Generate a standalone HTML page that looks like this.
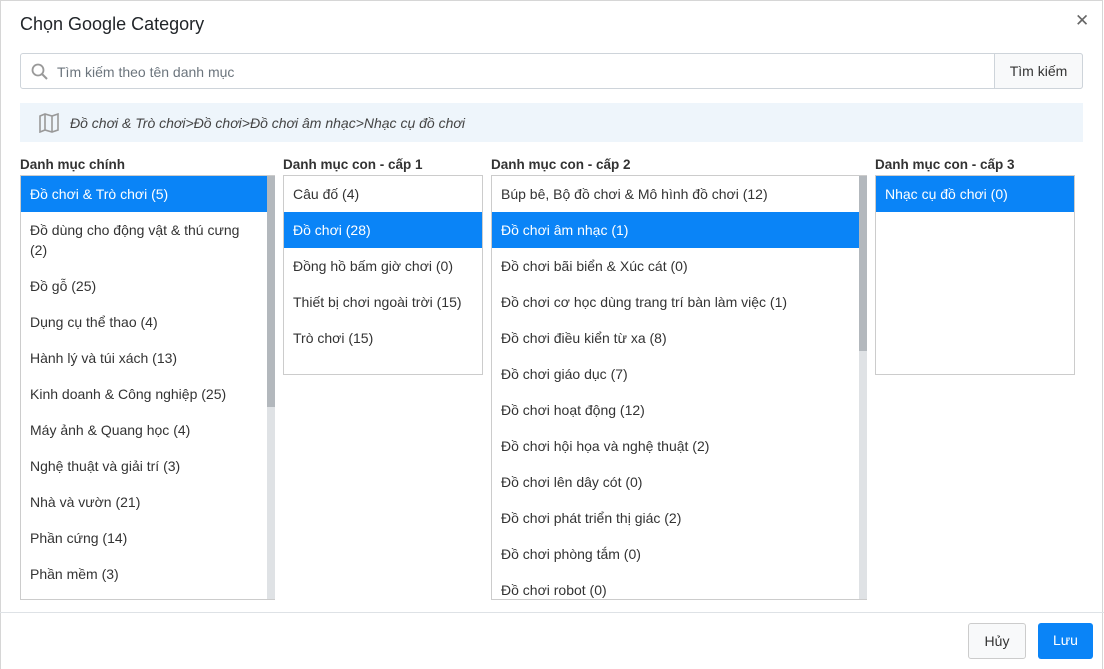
<!DOCTYPE html><html><head><meta charset="utf-8"><style>
*{box-sizing:border-box;margin:0;padding:0}
body{width:1104px;height:669px;background:#fff;font-family:"Liberation Sans",sans-serif;font-size:14px;color:#333;position:relative;overflow:hidden}
.frame{position:absolute;left:0;top:0;width:1103px;height:669px;border:1px solid #d6d6d6;border-bottom:none}
.a{position:absolute}
.title{left:20px;top:14px;font-size:18px;color:#212529}
.close{left:1075px;top:11px;font-size:17px;color:#666}
.search{left:20px;top:53px;width:1063px;height:36px;border:1px solid #ced4da;border-radius:3px}
.search span{position:absolute;left:36px;top:10px;color:#6c757d}
.btn1{position:absolute;right:-1px;top:-1px;height:36px;width:89px;border:1px solid #ced4da;border-radius:0 3px 3px 0;background:#f8f9fa;text-align:center;line-height:34px;color:#333}
.bc{left:20px;top:103px;width:1063px;height:39px;background:#eef5fb}
.bc span{position:absolute;left:50px;top:12px;font-style:italic;font-size:14px;color:#444}
.lab{top:157px;font-weight:bold;font-size:13.5px;color:#333}
.list{border:1px solid #ccc;overflow:hidden}
.it{height:36px;padding:10px 9px;white-space:nowrap;color:#333}
.it.two{height:56px;white-space:normal;line-height:20px;padding:8px 9px}
.sel{background:#0a84f7;color:#fff}
.sb{background:#dfe2e5}.th{background:#b3b8bd}
.foot{left:0;top:612px;width:1104px;border-top:1px solid #dee2e6}
.b{top:623px;height:36px;border-radius:3px;text-align:center;line-height:34px}
</style></head><body><div class="frame"></div>
<div class="a title">Chọn Google Category</div>
<div class="a close">✕</div>
<div class="a search"><svg class="a" style="left:10px;top:9px" width="18" height="18" viewBox="0 0 18 18"><circle cx="7" cy="7" r="5.5" fill="none" stroke="#999" stroke-width="1.8"/><path d="M11 11l5 5" stroke="#999" stroke-width="2"/></svg><span>Tìm kiếm theo tên danh mục</span><div class="btn1">Tìm kiếm</div></div>
<div class="a bc"><svg class="a" style="left:18px;top:10px" width="22" height="20" viewBox="0 0 22 20"><path d="M2 3l5-2 7 2 6-2v16l-6 2-7-2-5 2z M7 1v16 M14 3v16" fill="none" stroke="#999" stroke-width="1.6"/></svg><span>Đồ chơi &amp; Trò chơi&gt;Đồ chơi&gt;Đồ chơi âm nhạc&gt;Nhạc cụ đồ chơi</span></div>
<div class="a lab" style="left:20px">Danh mục chính</div>
<div class="a lab" style="left:283px">Danh mục con - cấp 1</div>
<div class="a lab" style="left:491px">Danh mục con - cấp 2</div>
<div class="a lab" style="left:875px">Danh mục con - cấp 3</div>
<div class="a list" style="left:20px;top:175px;width:255px;height:425px;border-right:none">
<div style="width:246px"><div class="it sel">Đồ chơi &amp; Trò chơi (5)</div><div class="it two">Đồ dùng cho động vật &amp; thú cưng (2)</div><div class="it">Đồ gỗ (25)</div><div class="it">Dụng cụ thể thao (4)</div><div class="it">Hành lý và túi xách (13)</div><div class="it">Kinh doanh &amp; Công nghiệp (25)</div><div class="it">Máy ảnh &amp; Quang học (4)</div><div class="it">Nghệ thuật và giải trí (3)</div><div class="it">Nhà và vườn (21)</div><div class="it">Phần cứng (14)</div><div class="it">Phần mềm (3)</div></div>
<div class="a sb" style="left:246px;top:0;width:9px;height:425px"><div class="th" style="height:231px"></div></div></div>
<div class="a list" style="left:283px;top:175px;width:200px;height:200px"><div class="it">Câu đố (4)</div><div class="it sel">Đồ chơi (28)</div><div class="it">Đồng hồ bấm giờ chơi (0)</div><div class="it">Thiết bị chơi ngoài trời (15)</div><div class="it">Trò chơi (15)</div></div>
<div class="a list" style="left:491px;top:175px;width:376px;height:425px;border-right:none">
<div style="width:367px"><div class="it">Búp bê, Bộ đồ chơi &amp; Mô hình đồ chơi (12)</div><div class="it sel">Đồ chơi âm nhạc (1)</div><div class="it">Đồ chơi bãi biển &amp; Xúc cát (0)</div><div class="it">Đồ chơi cơ học dùng trang trí bàn làm việc (1)</div><div class="it">Đồ chơi điều kiển từ xa (8)</div><div class="it">Đồ chơi giáo dục (7)</div><div class="it">Đồ chơi hoạt động (12)</div><div class="it">Đồ chơi hội họa và nghệ thuật (2)</div><div class="it">Đồ chơi lên dây cót (0)</div><div class="it">Đồ chơi phát triển thị giác (2)</div><div class="it">Đồ chơi phòng tắm (0)</div><div class="it">Đồ chơi robot (0)</div></div>
<div class="a sb" style="left:367px;top:0;width:9px;height:425px"><div class="th" style="height:175px"></div></div></div>
<div class="a list" style="left:875px;top:175px;width:200px;height:200px"><div class="it sel">Nhạc cụ đồ chơi (0)</div></div>
<div class="a foot"></div>
<div class="a b" style="left:968px;width:58px;border:1px solid #ccc;background:#f8f9fa">Hủy</div>
<div class="a b" style="left:1038px;width:55px;background:#0a84f7;color:#fff">Lưu</div>
</body></html>
